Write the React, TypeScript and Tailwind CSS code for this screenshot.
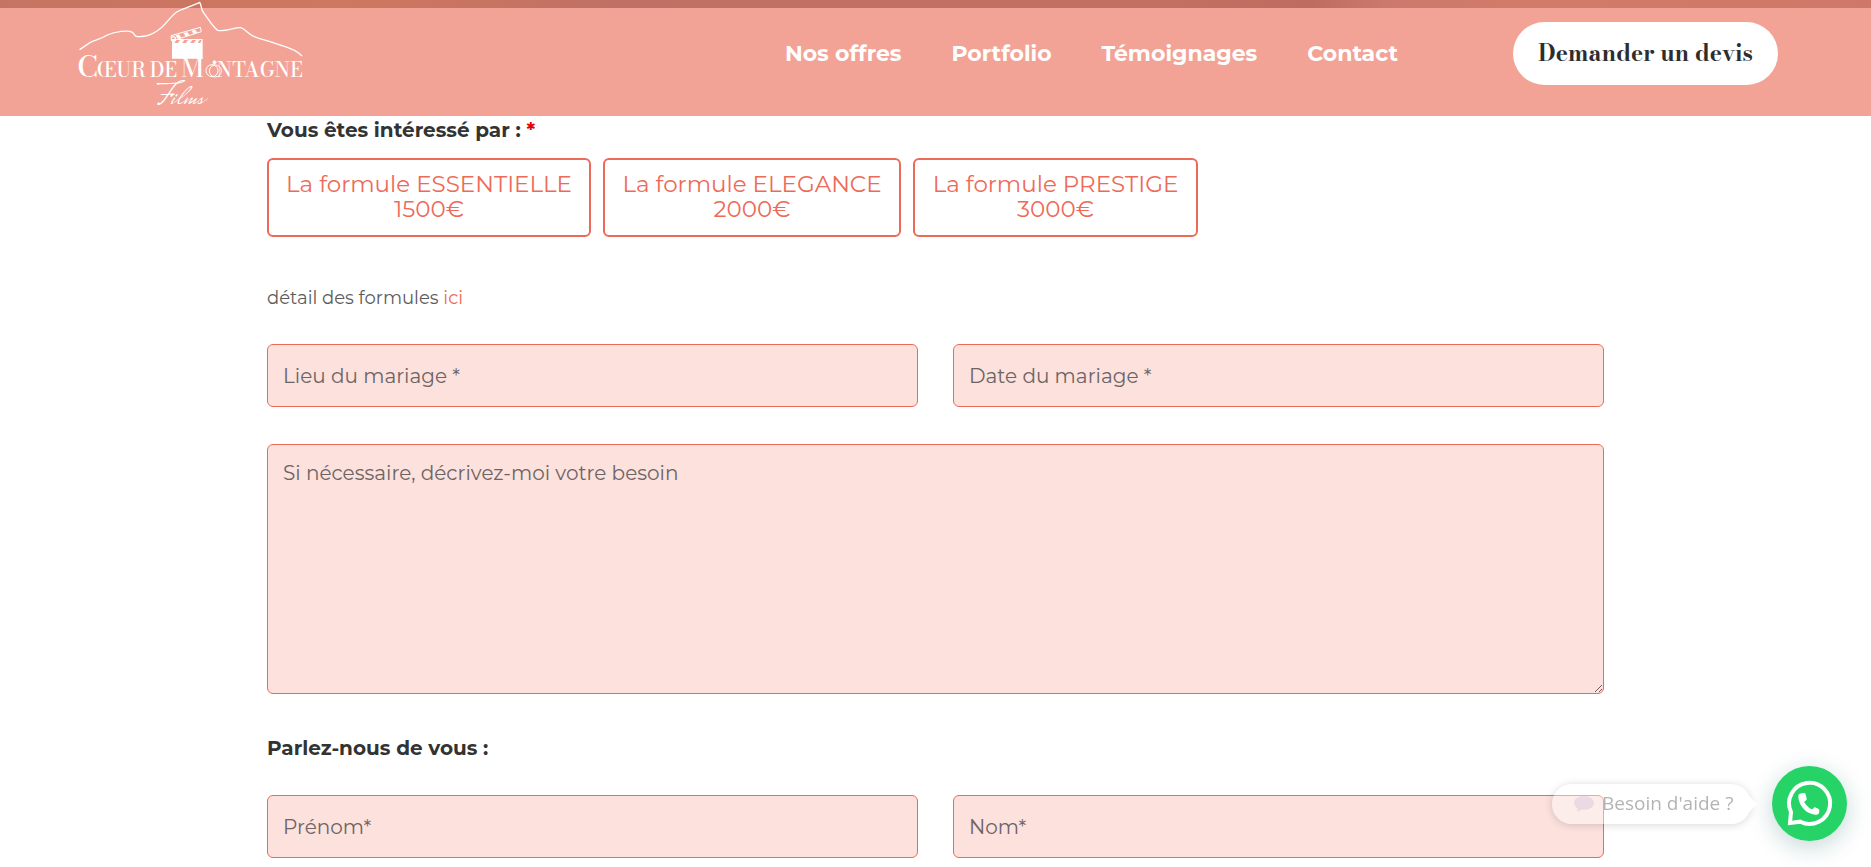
import type { ReactNode } from 'react'

const navLinks = [
  { label: 'Nos offres', href: '#offres' },
  { label: 'Portfolio', href: '#portfolio' },
  { label: 'Témoignages', href: '#temoignages' },
  { label: 'Contact', href: '#contact' },
]

const formules = [
  { name: 'La formule ESSENTIELLE', price: '1500€', width: 'min-w-[324px]' },
  { name: 'La formule ELEGANCE', price: '2000€', width: 'min-w-[298px]' },
  { name: 'La formule PRESTIGE', price: '3000€', width: 'min-w-[285px]' },
]

const fieldClass =
  'block w-full rounded-md border border-[#ee6a58] bg-[#fce1dd] px-[15px] text-xl text-[#333] placeholder:text-[#6e6464] outline-none'

function Logo() {
  return (
    <svg
      viewBox="54 0 678 324"
      className="w-[226px] h-[108px] overflow-visible"
      role="img"
      aria-label="Cœur de Montagne Films"
      fill="none"
      stroke="#fff"
    >
      <path
        d="M60 148C78 137 88 127 103 122C118 117 128 114 142 105C165 95 205 89 217 97C225 103 222 109 233 110C262 111 275 103 291 93C324 72 330 45 356 33C378 23 398 17 419 7C425 17 423 28 430 37C446 58 459 82 473 91C499 96 520 82 543 83C557 88 564 103 581 109C604 119 618 120 637 127C662 138 704 142 725 167"
        strokeWidth="4"
        strokeLinecap="round"
      />
      {/* clapperboard */}
      <path d="M333 107L421 82L424 95L336 123Z" strokeWidth="3" />
      <path
        d="M346 106L357 103L364 113L353 116ZM370 99L382 96L388 105L377 109ZM394 92L406 89L412 98L401 102Z"
        fill="#fff"
        stroke="none"
      />
      <circle cx="340" cy="116" r="6" strokeWidth="4" />
      <path
        d="M336 117H428V176H336ZM349 120L343 129H354L360 120ZM373 120L367 129H378L384 120ZM397 120L391 129H402L408 120ZM419 120L413 129H421L425 120Z"
        fill="#fff"
        fillRule="evenodd"
        stroke="none"
      />
      <g fill="#fff" stroke="none" fontWeight="500" fontFamily="'Bodoni Moda', 'Liberation Serif', serif">
        <text x="52" y="232" fontSize="88">C</text>
        <text x="111" y="232" fontSize="60">ŒUR</text>
        <text x="269" y="232" fontSize="60">DE</text>
        <text x="364" y="232" fontSize="76">M</text>
        <text x="728" y="232" fontSize="60" textAnchor="end">NTAGNE</text>
        <text
          x="292"
          y="312"
          fontSize="94"
          fontWeight="400"
          fontFamily="'Mrs Saint Delafield', 'Allura', 'Great Vibes', 'Dancing Script', 'Liberation Serif', cursive"
        >
          Films
        </text>
      </g>
      {/* wedding rings */}
      <circle cx="456" cy="212" r="18" strokeWidth="3" />
      <circle cx="466" cy="213" r="18" strokeWidth="3" />
      <path d="M458 187L463 181L469 187L463 194Z" fill="#fff" strokeWidth="2" />
    </svg>
  )
}

function Header() {
  return (
    <header className="flex-shrink-0">
      <div className="h-2 bg-[linear-gradient(90deg,#c57363_0%,#cf7860_18%,#c07064_33%,#c37062_62%,#bf6c60_70%,#cb796d_74%,#d27b68_82%,#cd7869_100%)]" />
      <div className="flex items-center bg-[#f2a396] pt-[14px] pb-[31px] pl-[78px] pr-[93px]">
        <a href="#accueil" className="-mt-[22px] -mb-[23px]">
          <Logo />
        </a>
        <nav className="ml-auto flex gap-[50px] text-[22px] font-bold text-white">
          {navLinks.map((link) => (
            <a key={link.href} href={link.href}>
              {link.label}
            </a>
          ))}
        </nav>
        <a
          href="#devis"
          className="ml-[115px] flex h-[63px] w-[265px] items-center justify-center rounded-full bg-white font-['Bodoni_Moda','Liberation_Serif',serif] text-[23px] font-bold text-[#2d2d2d]"
        >
          Demander un devis
        </a>
      </div>
    </header>
  )
}

function Field({ id, label }: { id: string; label: string }) {
  return (
    <input id={id} name={id} type="text" aria-label={label} placeholder={label} className={`${fieldClass} h-[63px]`} />
  )
}

function Row({ children }: { children: ReactNode }) {
  return <div className="grid grid-cols-2 gap-[35px]">{children}</div>
}

function DevisForm() {
  return (
    <form className="mx-auto w-full max-w-[1337px] pb-[9px]">
      <fieldset>
        <legend className="text-xl leading-7 font-bold text-[#333]">
          Vous êtes intéressé par : <span className="text-[#e60000]">*</span>
        </legend>
        <div className="mt-[14px] flex gap-3">
          {formules.map((f) => (
            <label
              key={f.name}
              className={`${f.width} relative flex h-[79px] cursor-pointer flex-col items-center rounded-md border-2 border-[#ee6a58] pt-3 text-[23px] leading-[25px] text-[#ee6a58]`}
            >
              <input type="radio" name="formule" value={f.name} className="sr-only" />
              <span>{f.name}</span>
              <span>{f.price}</span>
            </label>
          ))}
        </div>
      </fieldset>
      <p className="mt-[47px] mb-8 text-lg leading-7 text-[#5c5c5c]">
        détail des formules{' '}
        <a href="#formules" className="text-[#ee6a58]">
          ici
        </a>
      </p>
      <Row>
        <Field id="lieu" label="Lieu du mariage *" />
        <Field id="date" label="Date du mariage *" />
      </Row>
      <textarea
        id="besoin"
        name="besoin"
        aria-label="Si nécessaire, décrivez-moi votre besoin"
        placeholder="Si nécessaire, décrivez-moi votre besoin"
        className={`${fieldClass} mt-[37px] h-[250px] resize-y py-3 leading-8`}
      />
      <h2 className="mt-10 mb-[33px] text-xl leading-7 font-bold text-[#333]">Parlez-nous de vous :</h2>
      <Row>
        <Field id="prenom" label="Prénom*" />
        <Field id="nom" label="Nom*" />
      </Row>
    </form>
  )
}

function WhatsAppWidget() {
  return (
    <div className="fixed right-6 bottom-[26px] flex items-center gap-[21px]">
      <div className="relative flex h-10 w-[199px] items-center rounded-full bg-white/40 pl-[22px] font-['Segoe_UI','Open_Sans',sans-serif] text-[19px] text-[#b4b4b4] shadow-[0_1px_8px_rgba(0,0,0,0.16)]">
        <svg viewBox="0 0 20 16" className="mr-2 h-4 w-5" aria-hidden="true">
          <path d="M10 0C4.500 0 0 3 0 7C0 9 1.500 11 3.500 12.200C3.700 13.500 3.400 14.600 2.800 15.500C5 15.300 6.500 14.700 7.700 13.500C15 14.500 20 11 20 7C20 3 15.500 0 10 0Z" fill="#ebd9e4" />
        </svg>
        <span className="whitespace-nowrap">Besoin d'aide ?</span>
        <svg viewBox="0 0 10 16" className="absolute top-3 -right-2 h-4 w-[10px]" aria-hidden="true">
          <path d="M0 0Q3 4 9 8Q3 12 0 16Z" fill="#fff" />
        </svg>
      </div>
      <button
        type="button"
        aria-label="Ouvrir WhatsApp"
        className="h-[75px] w-[75px] rounded-full bg-[#25d366] shadow-[0_6px_24px_rgba(7,94,84,0.24)]"
      >
        <svg viewBox="0 0 225 225" className="h-full w-full">
          <path
            d="M54 171L57 138A61.500 61.500 0 1 1 85 167Z"
            fill="none"
            stroke="#fff"
            strokeWidth="12"
          />
          <path
            d="M82 84C87 81 93 81 98 81C101 82 102 90 104 98C105 103 96 106 97 109C103 119 109 125 119 130C122 131 125 124 129 124C136 127 141 129 142 132C142 138 141 143 138 145C131 149 119 145 107 139C91 129 81 112 79 94C79 90 79 86 82 84Z"
            fill="#fff"
          />
        </svg>
      </button>
    </div>
  )
}

export default function App() {
  return (
    <div className="flex min-h-screen flex-col bg-white font-['Montserrat','Inter',sans-serif]">
      <Header />
      <main>
        <DevisForm />
      </main>
      <WhatsAppWidget />
    </div>
  )
}
